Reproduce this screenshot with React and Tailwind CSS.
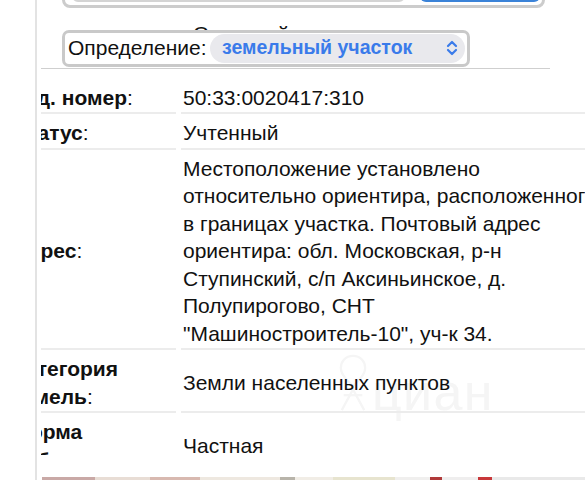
// Карточка участка: поиск, выбор определения и таблица характеристик
const strip = [
  ["w-[53px]", "bg-[#c9a9a6]"],
  ["w-[55px]", "bg-[#e8ddd5]"],
  ["w-[50px]", "bg-[#d8b9b0]"],
  ["w-[80px]", "bg-[#eee8e0]"],
  ["w-[15px]", "bg-[#b8b4aa]"],
  ["w-[38px]", "bg-[#f1ede6]"],
  ["w-[62px]", "bg-[#e7e4cf]"],
  ["w-[35px]", "bg-[#f0efee]"],
  ["w-[12px]", "bg-[#b03a3a]"],
  ["w-[36px]", "bg-[#efeeee]"],
  ["w-[14px]", "bg-[#c8383a]"],
  ["w-[93px]", "bg-[#e9e9e9]"],
];

const App = () => {
  return (
    <div className="relative isolate h-[480px] w-[585px] overflow-hidden bg-white font-['Liberation_Sans',Arial,sans-serif] text-[#111]">
      {/* водяной знак */}
      <div className="pointer-events-none absolute left-[338px] top-[354px] -z-10 flex items-end gap-1 text-[#f5f5f5]">
        <svg width="30" height="58" viewBox="0 0 32 62" fill="none" stroke="currentColor" strokeWidth="2.5">
          <path d="M16 2 C8 2 3 8 3 15 C3 24 16 34 16 34 C16 34 29 24 29 15 C29 8 24 2 16 2 Z" />
          <path d="M4 60 L16 38 L28 60" />
          <path d="M6 44 L26 44" />
        </svg>
        <span className="-mb-[6px] text-[52px] leading-[52px] tracking-wide">циан</span>
      </div>

      <div className="ml-[35px] h-full border-l-2 border-[#e3e3e3] pl-1">
        <div className="h-full overflow-hidden">
          {/* строка поиска */}
          <div className="-mt-[30px] ml-[21px] flex h-[38px] w-[483px] items-end gap-[15px] rounded-lg border-[3px] border-[#cccccc] bg-white pb-[3px] pl-[7px] pr-[2px]">
            <div className="h-[30px] w-[333px] rounded-md border-2 border-[#d4d4d4]" />
            <div className="h-[30px] w-[120px] rounded-md bg-[#3b83d8]" />
          </div>

          <div className="mt-[12px] h-[27.5px] pl-[152px] text-[21px] leading-[27.5px]">
            Основной
          </div>

          {/* выбор определения */}
          <div className="relative z-10 -mt-[18px] ml-[21px] flex h-[37px] w-[408px] items-center rounded-[7px] border-[3px] border-[#c9c9c9] bg-white pl-[3px] pr-[2px]">
            <span className="text-[21px]">Определение:</span>
            <div className="ml-auto flex h-[29px] w-[255px] items-center justify-between rounded-full bg-[#e9e9ed] pl-[12px] pr-[7px] text-[19.5px] font-semibold text-[#3a7bea]">
              земельный участок
              <svg width="12" height="18" viewBox="0 0 12 18" fill="none" stroke="currentColor" strokeWidth="2.2" strokeLinecap="round" strokeLinejoin="round">
                <path d="M2 7 L6 3 L10 7" />
                <path d="M2 11 L6 15 L10 11" />
              </svg>
            </div>
          </div>

          <div className="mt-[1px] h-px w-[509px] bg-[#cfcfcf]" />

          {/* характеристики */}
          <table className="-ml-[36px] mt-[10px] w-[601px] table-fixed border-separate border-spacing-x-[5px] border-spacing-y-[4px] text-[21px] leading-[27.5px]">
            <colgroup>
              <col className="w-[166px]" />
              <col className="w-[420px]" />
            </colgroup>
            <tbody>
              <tr>
                <td className="border-b-2 border-[#ececec] px-[2px] py-[1px]">
                  <b>Кад. номер</b>:
                </td>
                <td className="whitespace-nowrap border-b-2 border-[#ececec] px-[2px] py-[1px]">
                  50:33:0020417:310
                </td>
              </tr>
              <tr>
                <td className="border-b-2 border-[#ececec] px-[2px] py-[1px]">
                  <b>Статус</b>:
                </td>
                <td className="whitespace-nowrap border-b-2 border-[#ececec] px-[2px] py-[1px]">
                  Учтенный
                </td>
              </tr>
              <tr>
                <td className="border-b-2 border-[#ececec] px-[2px] py-[1px]">
                  <b>Адрес</b>:
                </td>
                <td className="whitespace-nowrap border-b-2 border-[#ececec] px-[2px] py-[1px]">
                  Местоположение установлено
                  <br />
                  относительно ориентира, расположенного
                  <br />
                  в границах участка. Почтовый адрес
                  <br />
                  ориентира: обл. Московская, р-н
                  <br />
                  Ступинский, с/п Аксиньинское, д.
                  <br />
                  Полупирогово, СНТ
                  <br />
                  "Машиностроитель-10", уч-к 34.
                </td>
              </tr>
              <tr>
                <td className="border-b-2 border-[#ececec] px-[2px] py-[1px]">
                  <b>Категория</b>
                  <br />
                  <b>земель</b>:
                </td>
                <td className="whitespace-nowrap border-b-2 border-[#ececec] px-[2px] py-[1px]">
                  Земли населенных пунктов
                </td>
              </tr>
              <tr>
                <td className="border-b-2 border-[#ececec] px-[2px] py-[1px]">
                  <b>Форма</b>
                  <br />
                  <b>собственности</b>:
                </td>
                <td className="whitespace-nowrap border-b-2 border-[#ececec] px-[2px] py-[1px]">
                  Частная
                </td>
              </tr>
            </tbody>
          </table>

          {/* галерея фотографий */}
          <div className="relative z-10 -mt-[25px] bg-white pt-[22px]">
            <div className="flex h-[6px] pl-px">
              {strip.map(([w, bg], i) => (
                <div key={i} className={`${w} ${bg} shrink-0`} />
              ))}
            </div>
          </div>
        </div>
      </div>
    </div>
  );
};

export default App;
